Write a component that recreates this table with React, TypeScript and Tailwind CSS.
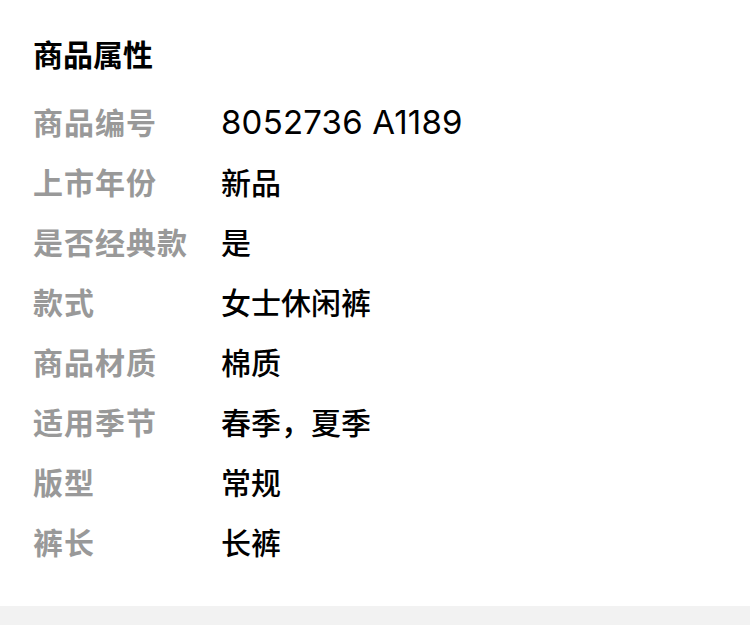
import React from "react";

const attrs = [
  { label: "商品编号", value: "8052736 A1189", latin: true },
  { label: "上市年份", value: "新品" },
  { label: "是否经典款", value: "是" },
  { label: "款式", value: "女士休闲裤" },
  { label: "商品材质", value: "棉质" },
  { label: "适用季节", value: "春季，夏季" },
  { label: "版型", value: "常规" },
  { label: "裤长", value: "长裤" },
];

const App = () => {
  return (
    <div className="w-[750px] bg-white font-['Inter','Noto_Sans_CJK_SC',sans-serif]">
      <div className="pl-[33px] pt-[40px] pb-[33px]">
        <div className="text-[30px] leading-[30px] font-bold text-black">商品属性</div>
        <ul className="mt-[23px]">
          {attrs.map((item) => (
            <li key={item.label} className="h-[60px] flex items-center">
              <span className="w-[188px] text-[30px] font-bold tracking-[1px] text-[#999999]">{item.label}</span>
              <span
                className={
                  item.latin
                    ? "text-[33px] font-normal tracking-[0.2px] text-black"
                    : "text-[30px] font-medium text-black"
                }
              >
                {item.value}
              </span>
            </li>
          ))}
        </ul>
      </div>
      <div className="h-[20px] bg-[#f2f2f2]" />
    </div>
  );
};

export default App;
